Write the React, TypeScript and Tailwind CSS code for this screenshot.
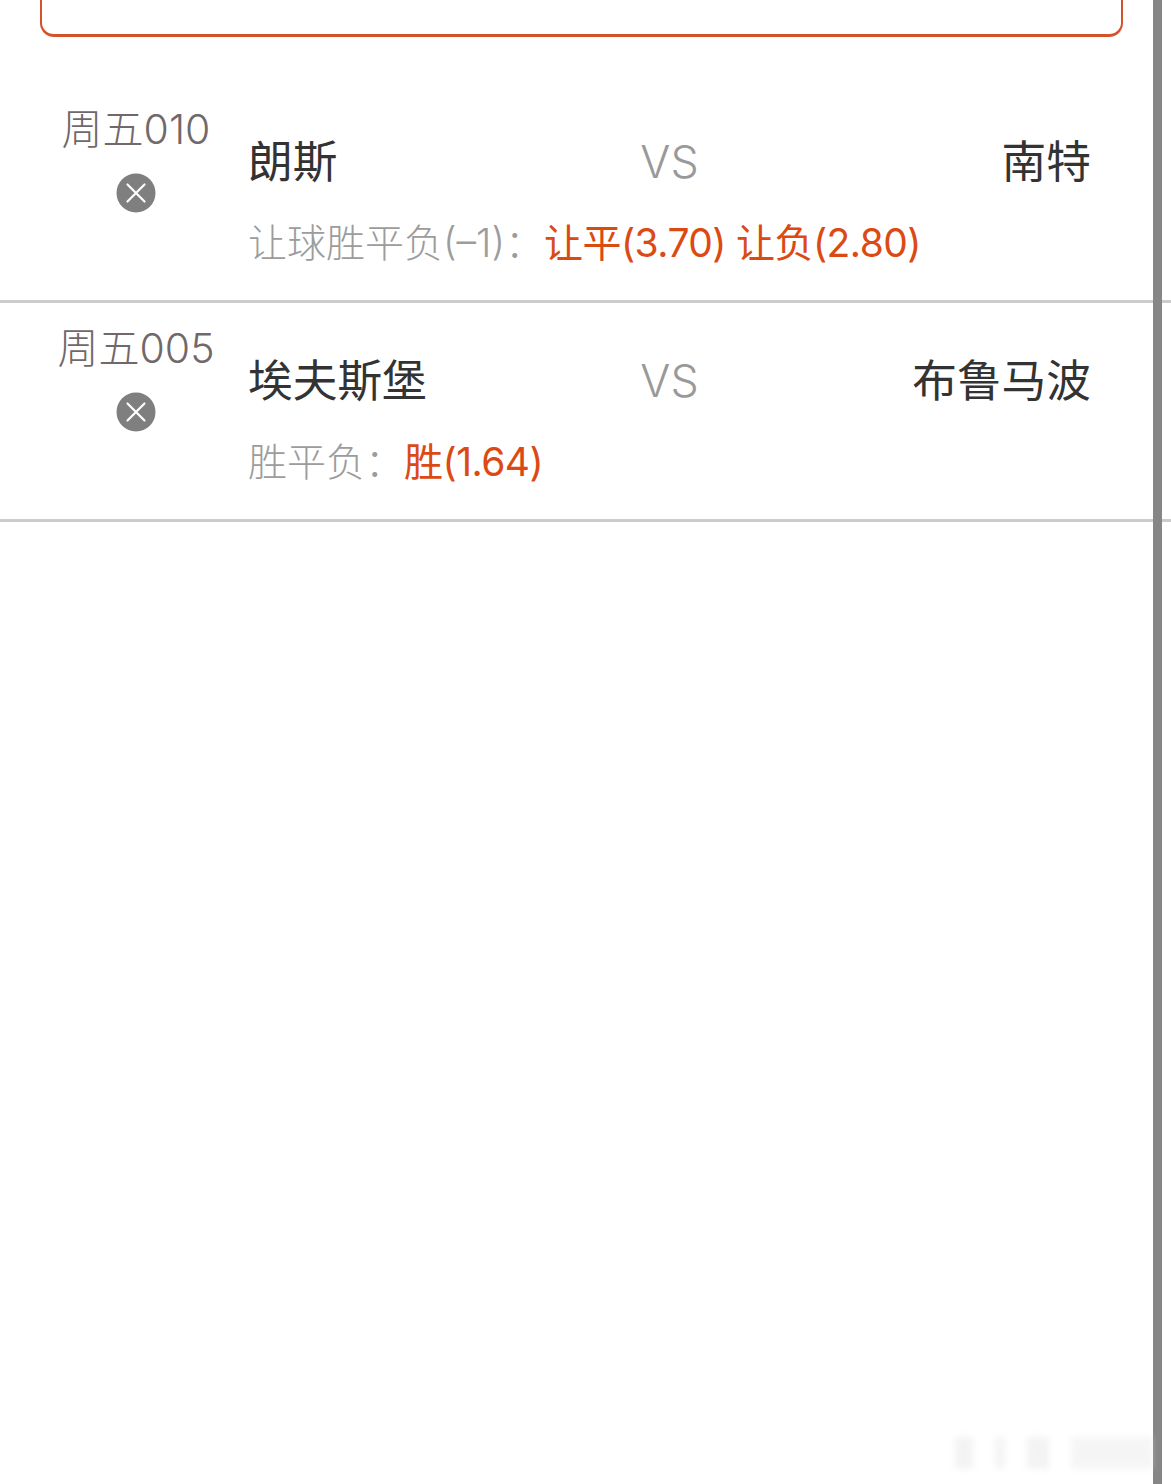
import React from "react";

interface Match {
  code: string;
  home: string;
  away: string;
  play: string;
  picks: string[];
}

const matches: Match[] = [
  {
    code: "周五010",
    home: "朗斯",
    away: "南特",
    play: "让球胜平负(–1)：",
    picks: ["让平(3.70)", "让负(2.80)"],
  },
  {
    code: "周五005",
    home: "埃夫斯堡",
    away: "布鲁马波",
    play: "胜平负：",
    picks: ["胜(1.64)"],
  },
];

const RemoveIcon = () => (
  <svg width="40" height="40" viewBox="0 0 40 40" className="block">
    <circle cx="20" cy="20" r="19.5" fill="#7f7f7f" />
    <path d="M11.5 11.5 L28.5 28.5 M28.5 11.5 L11.5 28.5" stroke="#fff" strokeWidth="2.2" strokeLinecap="round" />
  </svg>
);

const MatchRow = ({ match }: { match: Match }) => (
  <div className="flex h-[219px] border-b-[3px] border-[#cccccc]">
    <div className="w-[248px] pl-[24px] pt-[20px] shrink-0 flex flex-col items-center">
      <div className="text-[41px] leading-[50px] text-[#70686a] font-light whitespace-nowrap">
        {match.code}
      </div>
      <div className="mt-[19px]">
        <RemoveIcon />
      </div>
    </div>
    <div className="w-[843px] pt-[53px]">
      <div className="grid grid-cols-3 items-center h-[50px] text-[44.7px] leading-[50px] text-[#333333]">
        <span>{match.home}</span>
        <span className="text-center text-[#999999] font-light">VS</span>
        <span className="text-right">{match.away}</span>
      </div>
      <div className="mt-[31px] flex text-[39px] leading-[50px] whitespace-nowrap">
        <span className="text-[#9c9c9c] font-light">{match.play}</span>
        <span className="text-[#dc4a14] flex gap-[10px] tracking-[-0.55px]">
          {match.picks.map((pick) => (
            <span key={pick}>{pick}</span>
          ))}
        </span>
      </div>
    </div>
  </div>
);

export default function App() {
  return (
    <div
      className="relative h-[1484px] overflow-hidden bg-white"
      style={{ fontFamily: 'Inter, "Noto Sans CJK SC", sans-serif' }}
    >
      <div className="px-[40px]">
        <div className="h-[37px] w-[1083px] rounded-b-[14px] border-x-2 border-b-[3px] border-[#d5532a]" />
      </div>
      <div className="pt-[47px]">
        {matches.map((match) => (
          <MatchRow key={match.code} match={match} />
        ))}
      </div>
      {/* scrollbar */}
      <div className="absolute top-0 left-[1153px] h-full w-[9px] bg-[#868686]" />
      {/* faded watermark */}
      <div className="absolute left-[955px] top-[1437px] flex h-[32px] w-[198px] gap-[22px] opacity-30 blur-[3px]">
        <div className="w-[18px] bg-[#d8d8d8]" />
        <div className="w-[10px] bg-[#dddddd]" />
        <div className="w-[22px] bg-[#d8d8d8]" />
        <div className="flex-1 bg-[#e0e0e0]" />
      </div>
    </div>
  );
}
